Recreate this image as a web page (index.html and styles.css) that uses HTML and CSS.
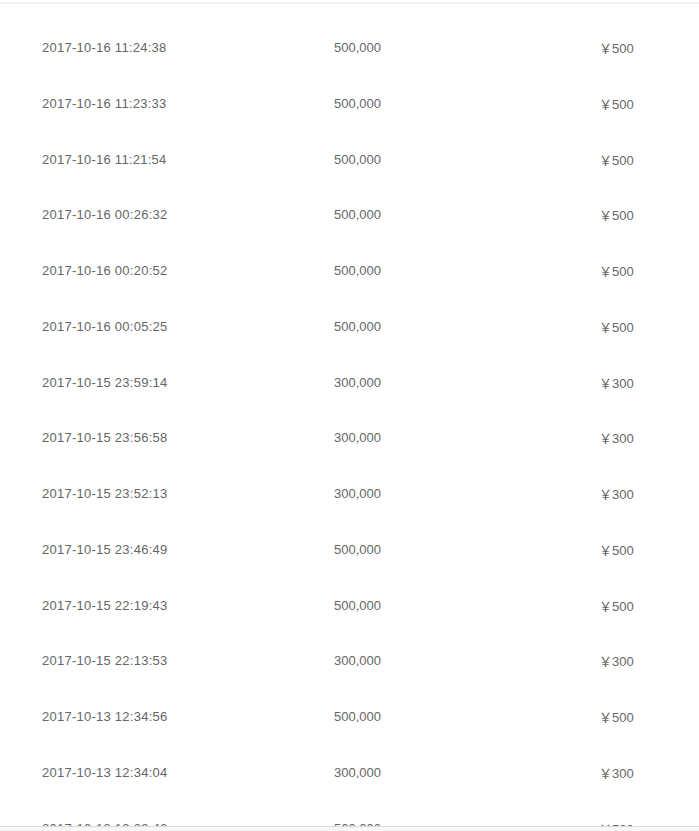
FILE: index.html
```html
<!DOCTYPE html>
<html lang="zh">
<head>
<meta charset="utf-8">
<title>记录</title>
<link rel="stylesheet" href="styles.css">
</head>
<body>
<div class="page">
  <div class="list">
    <div class="row"><span class="c1">2017-10-16 11:24:38</span><span class="c2">500,000</span><span class="c3"><span class="yen">￥</span>500</span></div>
    <div class="row"><span class="c1">2017-10-16 11:23:33</span><span class="c2">500,000</span><span class="c3"><span class="yen">￥</span>500</span></div>
    <div class="row"><span class="c1">2017-10-16 11:21:54</span><span class="c2">500,000</span><span class="c3"><span class="yen">￥</span>500</span></div>
    <div class="row"><span class="c1">2017-10-16 00:26:32</span><span class="c2">500,000</span><span class="c3"><span class="yen">￥</span>500</span></div>
    <div class="row"><span class="c1">2017-10-16 00:20:52</span><span class="c2">500,000</span><span class="c3"><span class="yen">￥</span>500</span></div>
    <div class="row"><span class="c1">2017-10-16 00:05:25</span><span class="c2">500,000</span><span class="c3"><span class="yen">￥</span>500</span></div>
    <div class="row"><span class="c1">2017-10-15 23:59:14</span><span class="c2">300,000</span><span class="c3"><span class="yen">￥</span>300</span></div>
    <div class="row"><span class="c1">2017-10-15 23:56:58</span><span class="c2">300,000</span><span class="c3"><span class="yen">￥</span>300</span></div>
    <div class="row"><span class="c1">2017-10-15 23:52:13</span><span class="c2">300,000</span><span class="c3"><span class="yen">￥</span>300</span></div>
    <div class="row"><span class="c1">2017-10-15 23:46:49</span><span class="c2">500,000</span><span class="c3"><span class="yen">￥</span>500</span></div>
    <div class="row"><span class="c1">2017-10-15 22:19:43</span><span class="c2">500,000</span><span class="c3"><span class="yen">￥</span>500</span></div>
    <div class="row"><span class="c1">2017-10-15 22:13:53</span><span class="c2">300,000</span><span class="c3"><span class="yen">￥</span>300</span></div>
    <div class="row"><span class="c1">2017-10-13 12:34:56</span><span class="c2">500,000</span><span class="c3"><span class="yen">￥</span>500</span></div>
    <div class="row"><span class="c1">2017-10-13 12:34:04</span><span class="c2">300,000</span><span class="c3"><span class="yen">￥</span>300</span></div>
    <div class="row"><span class="c1">2017-10-13 12:33:42</span><span class="c2">500,000</span><span class="c3"><span class="yen">￥</span>500</span></div>
  </div>
</div>
<div class="footer"></div>
</body>
</html>
```
FILE: styles.css
```css
html, body {
  margin: 0;
  padding: 0;
  background: #fff;
  overflow: hidden;
}
body {
  font-family: "Liberation Sans", Arial, "Noto Sans CJK SC", sans-serif;
  font-size: 13px;
  color: #666;
  height: 831px;
}
.page {
  padding-top: 3px;
}
.list {
  border-top: 1px solid #ececec;
  box-shadow: 0 -1px 1px #f4f4f4;
  padding-top: 16px;
}
.row {
  display: grid;
  grid-template-columns: 292px 265px 1fr;
  padding-left: 42px;
  height: 55.75px;
  line-height: 55.75px;
}
.c1 {
  letter-spacing: 0.25px;
}
.yen {
  font-family: "Noto Sans CJK SC", sans-serif;
  font-size: 13px;
}
.footer {
  position: fixed;
  left: 0;
  right: 0;
  bottom: 0;
  height: 4px;
  border-top: 1px solid #dcdcdc;
  background: #f7f7f7;
}
```
